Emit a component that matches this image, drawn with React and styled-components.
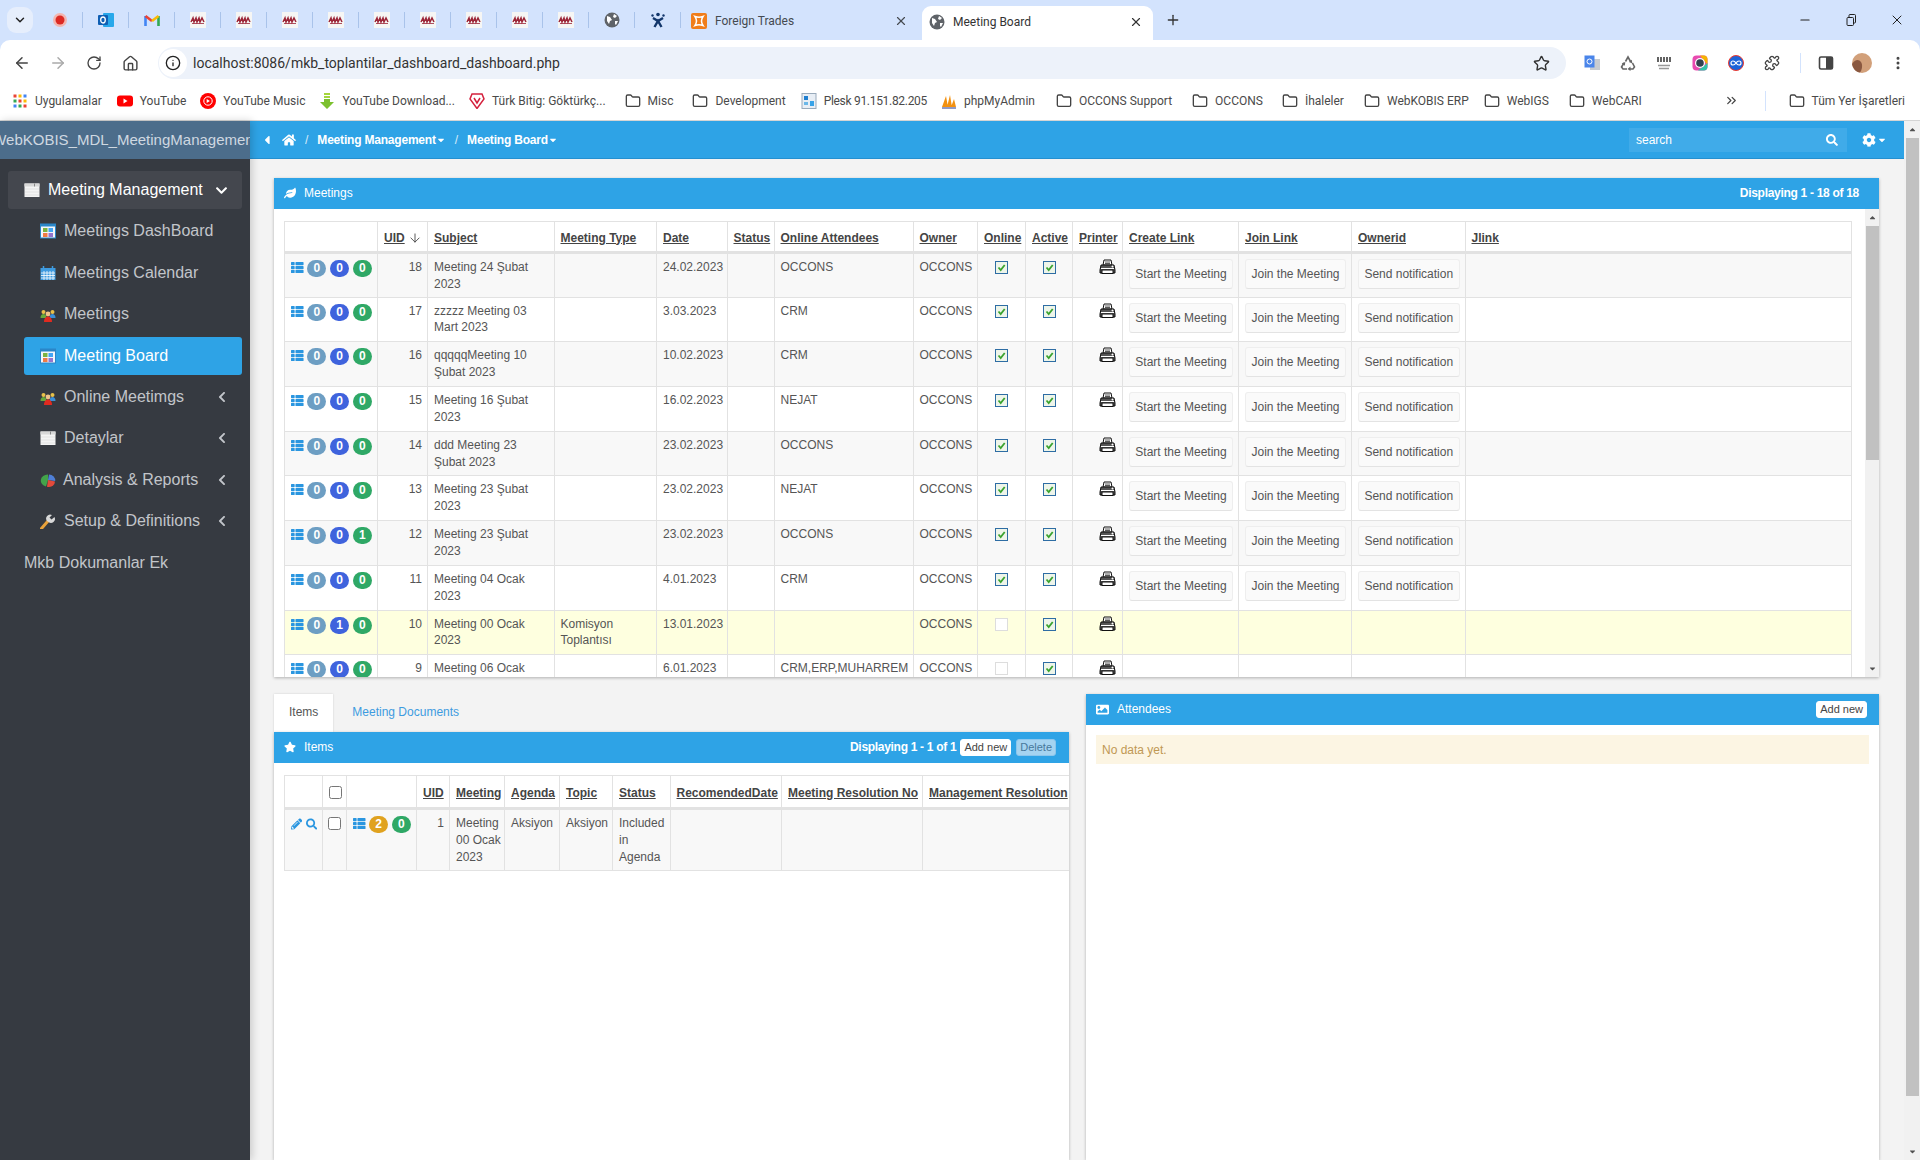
import React from 'react';
import styled, { createGlobalStyle } from 'styled-components';
import {
  ArrowLeft, ArrowRight, RotateCw, House, Info, Star, Puzzle, Folder, ChevronsRight,
  X, Plus, Minus, EllipsisVertical, ChevronDown, ArrowDown,
} from 'lucide-react';
import {
  FaLeaf, FaStar, FaImage, FaHome, FaSearch, FaCog, FaPencilAlt, FaThList,
  FaCaretLeft, FaCaretDown, FaCaretUp, FaChevronDown, FaChevronLeft,
} from 'react-icons/fa';

const GlobalStyle = createGlobalStyle`
  html, body { margin: 0; padding: 0; height: 100%; overflow: hidden; }
  body { font-family: "Liberation Sans", Arial, sans-serif; font-size: 12px; color: #555; }
  * { box-sizing: border-box; }
`;

const Page = styled.div`
  width: 1920px;
  height: 1160px;
  display: flex;
  flex-direction: column;
  overflow: hidden;
  background: #d3e3fd;
`;

/* browser chrome */
const TabStrip = styled.div`
  height: 40px;
  display: flex;
  align-items: flex-end;
  padding-left: 7px;
  font-family: Roboto, "Liberation Sans", sans-serif;
  font-size: 12px;
  color: #444;
`;

const TabListButton = styled.div`
  width: 26px;
  height: 26px;
  margin: 0 4px 7px 0;
  border-radius: 9px;
  background: #e6eefc;
  display: flex;
  align-items: center;
  justify-content: center;
  color: #222;
`;

const PinnedTab = styled.div`
  width: 46px;
  height: 40px;
  display: flex;
  align-items: center;
  justify-content: center;
  position: relative;
  &::after {
    content: '';
    position: absolute;
    right: 0;
    top: 12px;
    height: 16px;
    width: 1px;
    background: #a9c3ea;
  }
`;

const OpenTab = styled.div`
  width: ${p => p.$w}px;
  height: 34px;
  display: flex;
  align-items: center;
  gap: 8px;
  padding: 0 ${p => (p.$active ? 10 : 14)}px ${p => (p.$active ? 3 : 0)}px ${p => p.$pad}px;
  background: ${p => (p.$active ? '#fff' : 'transparent')};
  border-radius: 9px 9px 0 0;
  margin-bottom: ${p => (p.$active ? 0 : 2)}px;
  color: ${p => (p.$active ? '#333' : '#454a50')};
`;

const TabTitle = styled.span`
  flex: 1;
  white-space: nowrap;
`;

const NewTab = styled.div`
  width: 40px;
  height: 40px;
  display: flex;
  align-items: center;
  justify-content: center;
  color: #333;
`;

const WindowButtons = styled.div`
  margin-left: auto;
  display: flex;
  color: #222;
`;

const WindowButton = styled.div`
  width: 46px;
  height: 40px;
  display: flex;
  align-items: center;
  justify-content: center;
`;

const Toolbar = styled.div`
  height: 44px;
  background: #fff;
  border-radius: 10px 10px 0 0;
  display: flex;
  align-items: center;
  padding: 2px 0 0 4px;
  color: #444;
`;

const ToolSlot = styled.div`
  width: 36px;
  height: 32px;
  flex: none;
  display: flex;
  align-items: center;
  justify-content: center;
  color: ${p => p.$color || '#444'};
`;

const AddressBar = styled.div`
  width: 1408px;
  height: 32px;
  margin: 0 8px 0 10px;
  border-radius: 16px;
  background: #edf2fa;
  display: flex;
  align-items: center;
  font-family: Roboto, "Liberation Sans", sans-serif;
  font-size: 14px;
  color: #333;
  padding-right: 16px;
`;

const InfoBubble = styled.div`
  width: 28px;
  height: 28px;
  margin: 0 6px 0 1px;
  border-radius: 50%;
  background: #fff;
  display: flex;
  align-items: center;
  justify-content: center;
  color: #222;
`;

const Url = styled.span`
  flex: 1;
`;

const ToolSep = styled.div`
  width: 1px;
  height: 20px;
  margin: 0 7px 0 10px;
  background: #d3e3fd;
`;

const Bookmarks = styled.div`
  height: 37px;
  background: #fff;
  border-bottom: 1px solid #d5d5d5;
  display: flex;
  align-items: center;
  gap: 17px;
  padding: 0 15px 3px 12px;
  font-family: Roboto, "Liberation Sans", sans-serif;
  font-size: 12px;
  color: #444;
`;

const Bookmark = styled.div`
  display: flex;
  align-items: center;
  gap: 7px;
  white-space: nowrap;
  color: #4a4a4a;
  margin-right: ${p => p.$adj || 0}px;
  letter-spacing: ${p => (p.$narrow ? '-0.3px' : 'normal')};
  svg { flex: none; }
`;

const BookmarkEnd = styled.div`
  margin-left: auto;
  display: flex;
  align-items: center;
  gap: 16px;
`;

/* app shell */
const Shell = styled.div`
  flex: 1;
  min-height: 0;
  display: flex;
  background: #f3f3f3;
`;

const Sidebar = styled.aside`
  width: 250px;
  flex: none;
  background: #363a41;
  box-shadow: 2px 0 8px rgba(0, 0, 0, 0.18);
  position: relative;
  z-index: 1;
  font-size: 16px;
`;

const Brand = styled.div`
  height: 38px;
  padding-bottom: 1px;
  background: #4c6d8b;
  color: #cfd8e1;
  font-size: 15px;
  display: flex;
  align-items: center;
  justify-content: center;
  overflow: hidden;
  white-space: nowrap;
`;

const Menu = styled.nav`
  padding: 12px 8px 0;
  display: flex;
  flex-direction: column;
  gap: 3.4px;
`;

const MenuItem = styled.div`
  height: 38px;
  display: flex;
  align-items: center;
  gap: ${p => p.$gap ?? 8}px;
  border-radius: 3px;
  margin-left: ${p => (p.$top ? 0 : 16)}px;
  padding: 0 14px 0 16px;
  background: ${p => (p.$active ? '#2ea3e6' : p.$top ? '#44474e' : 'transparent')};
  color: ${p => (p.$active || p.$top ? '#fff' : '#c2c5ca')};
  svg { flex: none; }
`;

const PlainMenuItem = styled(MenuItem)`
  padding-left: 0;
  background: transparent;
  color: #c2c5ca;
`;

const MenuLabel = styled.span`
  flex: 1;
  white-space: nowrap;
`;

const Main = styled.main`
  flex: 1;
  min-width: 0;
  display: flex;
  flex-direction: column;
`;

const TopBar = styled.header`
  height: 38px;
  flex: none;
  background: #2ea3e6;
  border-bottom: 1px solid #2590d0;
  display: flex;
  align-items: center;
  color: #fff;
  padding: 0 17px 0 10px;
  font-weight: bold;
`;

const Crumb = styled.span`
  display: flex;
  align-items: center;
  white-space: nowrap;
  letter-spacing: -0.2px;
`;

const CrumbSep = styled.span`
  margin: 0 9px;
  font-weight: normal;
  opacity: 0.8;
`;

const HomeLink = styled.span`
  display: flex;
  margin-left: 8px;
`;

const SearchBox = styled.div`
  margin-left: auto;
  width: 218px;
  height: 24px;
  background: #40abe9;
  display: flex;
  align-items: center;
  padding: 0 9px 0 7px;
`;

const SearchInput = styled.input`
  flex: 1;
  min-width: 0;
  border: 0;
  outline: 0;
  background: transparent;
  color: #fff;
  font: 12px "Liberation Sans", Arial, sans-serif;
  padding: 0;
  &::placeholder { color: #fff; opacity: 1; }
`;

const GearMenu = styled.div`
  display: flex;
  align-items: center;
  margin-left: 15px;
  gap: 1px;
`;

const Content = styled.div`
  flex: 1;
  min-height: 0;
  display: flex;
  flex-direction: column;
  padding: 19px 25px 0 24px;
  gap: 17px;
`;

const Panel = styled.section`
  background: #fff;
  box-shadow: 0 1px 3px rgba(0, 0, 0, 0.28);
  display: flex;
  flex-direction: column;
  overflow: hidden;
  height: ${p => p.$h || 'auto'};
  flex: ${p => (p.$grow ? 1 : 'none')};
  min-height: 0;
`;

const PanelHead = styled.div`
  height: 31px;
  flex: none;
  background: #2ea3e6;
  color: #fff;
  display: flex;
  align-items: center;
  gap: 8px;
  padding: 0 ${p => p.$right ?? 13}px 1px 10px;
`;

const PanelTitle = styled.span`
  flex: 1;
`;

const Count = styled.span`
  font-weight: bold;
  letter-spacing: -0.3px;
`;

const HeadButton = styled.button`
  height: 17px;
  padding: 0 3px;
  border: 1px solid ${p => (p.$muted ? '#8cc6ec' : '#fff')};
  border-radius: 3px;
  background: ${p => (p.$muted ? '#a5d3f0' : '#fff')};
  color: ${p => (p.$muted ? '#47789b' : '#444')};
  font: 11px "Liberation Sans", Arial, sans-serif;
  margin-left: ${p => p.$ml ?? 0}px;
`;

const PanelBody = styled.div`
  flex: 1;
  min-height: 0;
  display: flex;
`;

const TableArea = styled.div`
  flex: 1;
  min-width: 0;
  overflow: hidden;
  padding: ${p => p.$pad};
`;

const Grid = styled.table`
  table-layout: fixed;
  border-collapse: collapse;
  width: ${p => p.$w}px;
  border: 1px solid #e2e2e2;
`;

const Column = styled.col`
  width: ${p => p.$w}px;
`;

const HeadCell = styled.th`
  height: ${p => p.$h || 31}px;
  padding: 2px 5px 0 6px;
  border: 1px solid #e2e2e2;
  border-bottom: 3px solid #e2e2e2;
  text-align: left;
  font-size: 12px;
  color: #444;
  white-space: nowrap;
  overflow: hidden;
`;

const HeadLink = styled.span`
  text-decoration: underline;
  display: inline-flex;
  align-items: center;
  gap: 3px;
`;

const Row = styled.tr`
  height: ${p => p.$h || 44.7}px;
  background: ${p => (p.$warn ? '#feffdf' : p.$striped ? '#f8f8f8' : '#fff')};
`;

const Cell = styled.td`
  padding: 5px ${p => (p.$flush ? 0 : p.$tight ? 2 : 5)}px 0 ${p => (p.$flush ? 0 : 6)}px;
  border: 1px solid #e2e2e2;
  vertical-align: top;
  line-height: 16.8px;
  text-align: ${p => p.$align || 'left'};
  white-space: ${p => (p.$nowrap ? 'nowrap' : 'normal')};
  overflow: hidden;
`;

const BadgeRow = styled.div`
  display: flex;
  align-items: center;
  gap: 3.5px;
  height: 17px;
  margin-top: 1px;
  color: #2a96e0;
  svg { margin-bottom: 2px; }
`;

const Badge = styled.span`
  width: 20px;
  height: 17px;
  border-radius: 9px;
  background: ${p => p.$color};
  color: #fff;
  font-weight: bold;
  font-size: 12px;
  line-height: 17px;
  text-align: center;
`;

const TickBox = styled.span`
  display: block;
  width: 13px;
  height: 13px;
  margin: 2px auto 0;
  border: 1px solid ${p => (p.$on ? '#2e6da4' : '#ddd')};
  background: ${p => (p.$on ? '#eef5ea' : '#fff')};
  svg { display: block; }
`;

const LinkButton = styled.button`
  display: block;
  width: 100%;
  height: 30px;
  padding: 0;
  border: 1px solid #eee;
  border-bottom-color: #e3e3e3;
  border-radius: 3px;
  background: #fafafa;
  color: #555;
  font: 12px "Liberation Sans", Arial, sans-serif;
`;

const PrintIcon = styled.div`
  text-align: right;
  padding-right: 1px;
  height: 16px;
`;

const TableCheck = styled.input`
  display: block;
  width: 13px;
  height: 13px;
  margin: ${p => p.$mt || 0}px auto 0;
`;

const ScrollTrack = styled.div`
  width: ${p => p.$w}px;
  flex: none;
  background: #f1f1f1;
  display: flex;
  flex-direction: column;
  align-items: center;
  color: #505050;
`;

const ScrollArrow = styled.div`
  height: 17px;
  flex: none;
  display: flex;
  align-items: center;
  justify-content: center;
  margin-top: ${p => (p.$end ? 'auto' : 0)};
`;

const ScrollThumb = styled.div`
  width: 13px;
  height: ${p => p.$h}px;
  background: #c1c1c1;
`;

const Lower = styled.div`
  flex: 1;
  min-height: 0;
  display: grid;
  grid-template-columns: 795px 793px;
  gap: 17px;
`;

const LeftStack = styled.div`
  display: flex;
  flex-direction: column;
  min-height: 0;
`;

const TabBar = styled.div`
  height: 38px;
  flex: none;
  display: flex;
  align-items: stretch;
`;

const PaneTab = styled.div`
  display: flex;
  align-items: center;
  padding: 0 ${p => p.$pad}px 2px;
  background: ${p => (p.$active ? '#fff' : 'transparent')};
  color: ${p => (p.$active ? '#555' : '#3d9be0')};
  box-shadow: ${p => (p.$active ? '0 0 2px rgba(0,0,0,0.15)' : 'none')};
`;

const Alert = styled.div`
  height: 29px;
  margin: 10px 10px 0;
  padding-left: 6px;
  background: #fcf5e3;
  color: #c09853;
  display: flex;
  align-items: center;
`;

const Legend = ({ children, size = 16 }) => (
  <svg width={size} height={size} viewBox="0 0 16 16">{children}</svg>
);

const WindowIcon = () => (
  <Legend>
    <rect x="0.5" y="1.5" width="15" height="13.5" fill="#f4f4f4" />
    <rect x="0.5" y="1.5" width="15" height="3" fill="#d8d8d8" />
    <rect x="10" y="1.5" width="1" height="3" fill="#888" />
    <path d="M1 7h14M1 10h14M1 13h14" stroke="#e2e2e2" />
  </Legend>
);

const BoardIcon = () => (
  <Legend>
    <rect x="0.5" y="1" width="15" height="14" fill="#f3f6fa" stroke="#2a86c8" />
    <rect x="0.5" y="1" width="15" height="2.5" fill="#2a86c8" />
    <rect x="3" y="5" width="4.5" height="4" fill="#7cb342" />
    <rect x="8.5" y="5" width="4.5" height="4" fill="#42a5f5" />
    <rect x="3" y="10" width="4.5" height="4" fill="#ef7b45" />
    <rect x="8.5" y="10" width="4.5" height="4" fill="#9575cd" />
  </Legend>
);

const CalendarIcon = () => (
  <Legend>
    <rect x="0.5" y="3" width="15" height="12" fill="#3f9be0" />
    <path d="M3.5 1v4M12.5 1v4" stroke="#3f9be0" strokeWidth="1.5" />
    <path d="M1 8h14M1 10.5h14M1 13h14M4 6v9M7 6v9M10 6v9M13 6v9" stroke="#fff" strokeWidth="0.8" />
  </Legend>
);

const PeopleIcon = () => (
  <Legend>
    <circle cx="3.5" cy="6" r="2" fill="#e8c14a" />
    <path d="M0.5 12c0-3 1.5-4 3-4s3 1 3 4z" fill="#68a83c" />
    <circle cx="12.5" cy="6" r="2" fill="#e8c14a" />
    <path d="M9.5 12c0-3 1.5-4 3-4s3 1 3 4z" fill="#3a8fd8" />
    <circle cx="8" cy="8" r="2.4" fill="#f0c48a" />
    <path d="M4 16c0-4 2-5.5 4-5.5s4 1.5 4 5.5z" fill="#e02b20" />
  </Legend>
);

const PieIcon = () => (
  <Legend>
    <path d="M8 8L9 2.5a6.5 6 0 0 1 6.2 6.5z" fill="#4f7fd6" />
    <path d="M8 8l7 1.5a7 6 0 0 1-6 5.5 6 6 0 0 1-2-.3z" fill="#e24a3b" />
    <path d="M8 8L6 14.500A7 6 0 0 1 .8 8 7 6 0 0 1 8 2.500z" fill="#43a34a" />
  </Legend>
);

const WrenchIcon = () => (
  <Legend>
    <path d="M1.5 15.500L8 8" stroke="#e9a23b" strokeWidth="3" strokeLinecap="round" />
    <path d="M7 8a4 4 0 0 1 5-6l-2.500 2.500 2 2L14.500 4a4 4 0 0 1-6 5z" fill="#d8d8d8" />
  </Legend>
);

const PrinterGlyph = () => (
  <svg width="17" height="16" viewBox="0 0 17 16">
    <path d="M5 1h7l1 5H4z" fill="#fff" stroke="#111" />
    <path d="M6 3h5M6 4.500h5" stroke="#111" strokeWidth="0.7" />
    <path d="M2 6h13l1 5v3H1v-3z" fill="#555" stroke="#111" />
    <path d="M2 9.500h13" stroke="#fff" />
    <rect x="3" y="11" width="11" height="3.500" fill="#fff" stroke="#111" />
    <circle cx="13.500" cy="7.500" r="1" fill="#fff" />
  </svg>
);

const CheckMark = () => (
  <svg width="11" height="11" viewBox="0 0 11 11">
    <path d="M2.500 5.500l2.200 2.500 4-5" fill="none" stroke="#3aa32f" strokeWidth="1.800" />
  </svg>
);

/* favicons */
const SiteIcon = () => (
  <Legend>
    <rect width="16" height="16" fill="#f6f6f4" />
    <path d="M1 10l2-4 1 4 2-4 1 4 2-4 1 4 2-4 2 4" fill="none" stroke="#9c2638" strokeWidth="1.500" />
    <path d="M2 11.500h12" stroke="#9c2638" strokeWidth="0.800" />
  </Legend>
);

const RedDotIcon = () => (
  <Legend>
    <circle cx="8" cy="8" r="7" fill="#f3b6b0" />
    <circle cx="8" cy="8" r="4.500" fill="#dc2a24" />
  </Legend>
);

const OutlookIcon = () => (
  <Legend>
    <rect x="5" y="1" width="11" height="14" rx="1" fill="#28a8ea" />
    <rect x="0" y="3" width="10" height="10" rx="1" fill="#0f5fb3" />
    <ellipse cx="5" cy="8" rx="2.300" ry="3" fill="none" stroke="#fff" strokeWidth="1.300" />
  </Legend>
);

const GmailIcon = () => (
  <Legend>
    <path d="M1.500 14V4" stroke="#4285f4" strokeWidth="2.600" />
    <path d="M14.500 14V4" stroke="#34a853" strokeWidth="2.600" />
    <path d="M1.500 4L8 9" stroke="#ea4335" strokeWidth="2.600" />
    <path d="M14.500 4L8 9" stroke="#fbbc04" strokeWidth="2.600" />
  </Legend>
);

const GlobeIcon = () => (
  <Legend>
    <circle cx="8" cy="8" r="7.500" fill="#5f6368" />
    <path d="M3 4l3 1 2 3-2 1-1 3-2-3zM10 2l3 2-2 2-2-1zM11 9l3 0-2 4-1-1z" fill="#fff" />
  </Legend>
);

const JiraIcon = () => (
  <Legend>
    <circle cx="8" cy="2.500" r="1.800" fill="#12366b" />
    <circle cx="2.500" cy="3.500" r="1.200" fill="#12366b" />
    <circle cx="13.500" cy="3.500" r="1.200" fill="#12366b" />
    <path d="M3 6l5 3 5-3M4.500 15L8 9l3.500 6" fill="none" stroke="#12366b" strokeWidth="2.400" />
  </Legend>
);

const XamppIcon = () => (
  <Legend>
    <rect width="16" height="16" rx="2" fill="#f07d1a" />
    <path d="M4 3.500c3 1 5 1 8 0-2 3-2 6 0 9-3-1-5-1-8 0 2-3 2-6 0-9z" fill="none" stroke="#fff" strokeWidth="1.500" />
  </Legend>
);

const AppsIcon = () => (
  <Legend>
    {['#ea4335', '#fbbc04', '#4285f4', '#34a853', '#ea4335', '#fbbc04', '#4285f4', '#34a853', '#ea4335'].map((c, i) => (
      <rect key={i} x={1.5 + (i % 3) * 5} y={1.5 + Math.floor(i / 3) * 5} width="3" height="3" fill={c} />
    ))}
  </Legend>
);

const YoutubeIcon = () => (
  <Legend>
    <rect y="2.500" width="16" height="11" rx="3" fill="#f00" />
    <path d="M6.500 5.500l4 2.500-4 2.500z" fill="#fff" />
  </Legend>
);

const MusicIcon = () => (
  <Legend>
    <circle cx="8" cy="8" r="8" fill="#f00" />
    <circle cx="8" cy="8" r="4.200" fill="none" stroke="#fff" />
    <path d="M6.700 6l3.200 2-3.200 2z" fill="#fff" />
  </Legend>
);

const DownloadIcon = () => (
  <Legend>
    <path d="M5 0h6v2H5zM5 3h6v2H5z" fill="#a5d63c" />
    <path d="M5 6h6v3h4l-7 7-7-7h4z" fill="#7cc12f" />
  </Legend>
);

const BitigIcon = () => (
  <Legend>
    <path d="M3 1h10l2 5-7 9.500L1 6z" fill="#fff" stroke="#d4213d" strokeWidth="1.500" />
    <path d="M5 5l3 5 3-5" fill="none" stroke="#d4213d" strokeWidth="1.500" />
  </Legend>
);

const PleskIcon = () => (
  <Legend>
    <rect x="1" y="0.500" width="14" height="15" fill="#e8eef5" stroke="#9ab" />
    <rect x="3" y="3" width="4" height="4" fill="#1f7fd0" />
    <rect x="9" y="8" width="4" height="5" fill="#38a3e8" />
    <rect x="3" y="9" width="4" height="3" fill="#6bb7e8" />
  </Legend>
);

const PmaIcon = () => (
  <Legend>
    <path d="M1 14L5 3l2 11zM6 14l3-12 2 12zM10 14l3-8 2 8z" fill="#f29111" />
    <path d="M1 15h14" stroke="#6c78af" strokeWidth="1.500" />
  </Legend>
);

const TranslateIcon = () => (
  <Legend>
    <rect x="6" y="4" width="10" height="11" fill="#c8ccd0" />
    <rect x="0.500" y="0.500" width="10" height="12" fill="#4a85ea" />
    <circle cx="5.500" cy="6.500" r="2.500" fill="none" stroke="#fff" />
  </Legend>
);

const RecycleIcon = () => (
  <Legend>
    <g fill="none" stroke="#666" strokeWidth="1.600">
      <path d="M5.500 6.500L8 2l2.500 4.500" />
      <path d="M12.500 8l2 4-1.500 2H9" />
      <path d="M7 14H3l-1.500-2L4 8" />
    </g>
    <path d="M11.800 4.800l.6 3.700-3.500-1.400zM10.500 11.500V16L7.500 14zM1.700 8.200l3.600-1.200-.5 3.700z" fill="#666" />
  </Legend>
);

const CoolIcon = () => (
  <Legend>
    <path d="M2 2v5M5 2v5M8 2v5M11 2v5M14 2v5" stroke="#222" strokeWidth="1.400" />
    <path d="M2 10.500h12M3 13.500h10" stroke="#999" strokeWidth="1.600" />
  </Legend>
);

const RingIcon = () => (
  <Legend>
    <rect x="0.500" y="0.500" width="15" height="15" rx="4" fill="#e84bb0" />
    <path d="M8 .5h4a4 4 0 0 1 3.500 3.500V10z" fill="#f4b400" />
    <path d="M15.500 8v4a4 4 0 0 1-3.500 3.500H6z" fill="#31c4a8" />
    <circle cx="8" cy="8" r="5" fill="#fff" />
    <circle cx="8" cy="8" r="3.800" fill="#33414f" />
  </Legend>
);

const LoopIcon = () => (
  <Legend>
    <circle cx="8" cy="8" r="7.500" fill="#1d63d8" stroke="#ee3a2f" />
    <path d="M8 8c-1-1.500-2-2-3-2a2 2 0 0 0 0 4c1 0 2-.5 3-2s2-2 3-2a2 2 0 0 1 0 4c-1 0-2-.5-3-2z" fill="none" stroke="#fff" strokeWidth="1.200" />
  </Legend>
);

const SidePanelIcon = () => (
  <Legend>
    <rect x="1.500" y="2" width="13" height="12" rx="1.500" fill="none" stroke="#444" strokeWidth="1.600" />
    <rect x="8" y="2" width="6.500" height="12" fill="#444" />
  </Legend>
);

const AvatarIcon = () => (
  <svg width="20" height="20" viewBox="0 0 20 20">
    <circle cx="10" cy="10" r="10" fill="#d2a07a" />
    <path d="M0 11c3-5 7-5 9-2s1 8-1 10.500C4 19 1 16 0 11z" fill="#8a5840" />
  </svg>
);

const RestoreIcon = () => (
  <svg width="12" height="12" viewBox="0 0 12 12" fill="none" stroke="#222">
    <rect x="2" y="3.500" width="6.500" height="8" rx="1" />
    <path d="M4 3.500V1.500a1 1 0 0 1 1-1h4.500a1 1 0 0 1 1 1V8a1 1 0 0 1-1 1h-1" />
  </svg>
);

const FolderGlyph = () => <Folder size={16} strokeWidth={2} color="#444" />;

const pinned = [RedDotIcon, OutlookIcon, GmailIcon, SiteIcon, SiteIcon, SiteIcon, SiteIcon, SiteIcon, SiteIcon, SiteIcon, SiteIcon, SiteIcon, GlobeIcon, JiraIcon];

const bookmarks = [
  { Icon: AppsIcon, label: 'Uygulamalar', adj: -2 },
  { Icon: YoutubeIcon, label: 'YouTube', adj: -3 },
  { Icon: MusicIcon, label: 'YouTube Music', adj: -3 },
  { Icon: DownloadIcon, label: 'YouTube Download...', adj: -3 },
  { Icon: BitigIcon, label: 'Türk Bitig: Göktürkç...', adj: 2 },
  { Icon: FolderGlyph, label: 'Misc', adj: 2 },
  { Icon: FolderGlyph, label: 'Development', adj: -2 },
  { Icon: PleskIcon, label: 'Plesk 91.151.82.205', adj: -3, narrow: true },
  { Icon: PmaIcon, label: 'phpMyAdmin', adj: 4 },
  { Icon: FolderGlyph, label: 'OCCONS Support', adj: 3 },
  { Icon: FolderGlyph, label: 'OCCONS', adj: 2 },
  { Icon: FolderGlyph, label: 'İhaleler', adj: 3 },
  { Icon: FolderGlyph, label: 'WebKOBIS ERP', adj: -2 },
  { Icon: FolderGlyph, label: 'WebIGS', adj: 3 },
  { Icon: FolderGlyph, label: 'WebCARI' },
];

const subItems = [
  { Icon: BoardIcon, label: 'Meetings DashBoard' },
  { Icon: CalendarIcon, label: 'Meetings Calendar' },
  { Icon: PeopleIcon, label: 'Meetings' },
  { Icon: BoardIcon, label: 'Meeting Board', active: true },
  { Icon: PeopleIcon, label: 'Online Meetimgs', more: true },
  { Icon: WindowIcon, label: 'Detaylar', more: true },
  { Icon: PieIcon, label: 'Analysis & Reports', more: true, gap: 7 },
  { Icon: WrenchIcon, label: 'Setup & Definitions', more: true },
];

const meetingCols = [
  ['', 93], ['UID', 50], ['Subject', 126.5], ['Meeting Type', 102.5], ['Date', 70.5], ['Status', 47],
  ['Online Attendees', 139], ['Owner', 64.5], ['Online', 48], ['Active', 47], ['Printer', 50],
  ['Create Link', 116], ['Join Link', 113], ['Ownerid', 113.5], ['Jlink', 386.5],
];

const meetings = [
  { uid: 18, subject: 'Meeting 24 Şubat 2023', date: '24.02.2023', att: 'OCCONS', counts: [0, 0, 0], on: true },
  { uid: 17, subject: 'zzzzz Meeting 03 Mart 2023', date: '3.03.2023', att: 'CRM', counts: [0, 0, 0], on: true },
  { uid: 16, subject: 'qqqqqMeeting 10 Şubat 2023', date: '10.02.2023', att: 'CRM', counts: [0, 0, 0], on: true },
  { uid: 15, subject: 'Meeting 16 Şubat 2023', date: '16.02.2023', att: 'NEJAT', counts: [0, 0, 0], on: true },
  { uid: 14, subject: 'ddd Meeting 23 Şubat 2023', date: '23.02.2023', att: 'OCCONS', counts: [0, 0, 0], on: true },
  { uid: 13, subject: 'Meeting 23 Şubat 2023', date: '23.02.2023', att: 'NEJAT', counts: [0, 0, 0], on: true },
  { uid: 12, subject: 'Meeting 23 Şubat 2023', date: '23.02.2023', att: 'OCCONS', counts: [0, 0, 1], on: true },
  { uid: 11, subject: 'Meeting 04 Ocak 2023', date: '4.01.2023', att: 'CRM', counts: [0, 0, 0], on: true },
  { uid: 10, subject: 'Meeting 00 Ocak 2023', type: 'Komisyon Toplantısı', date: '13.01.2023', att: '', counts: [0, 1, 0], on: false, warn: true },
  { uid: 9, subject: 'Meeting 06 Ocak 2023', date: '6.01.2023', att: 'CRM,ERP,MUHARREM', counts: [0, 0, 0], on: false },
];

const itemCols = [
  ['', 38], ['check', 24], ['', 70], ['UID', 33], ['Meeting', 55], ['Agenda', 55], ['Topic', 53],
  ['Status', 57.5], ['RecomendedDate', 111.5], ['Meeting Resolution No', 141], ['Management Resolution', 155],
];

const badgeColors = ['#6d9ec3', '#3f63dd', '#2fa866'];

const MeetingRow = ({ m, striped }) => (
  <Row $warn={m.warn} $striped={striped}>
    <Cell>
      <BadgeRow>
        <FaThList size={13} />
        {m.counts.map((c, i) => <Badge key={i} $color={badgeColors[i]}>{c}</Badge>)}
      </BadgeRow>
    </Cell>
    <Cell $align="right">{m.uid}</Cell>
    <Cell>{m.subject}</Cell>
    <Cell>{m.type}</Cell>
    <Cell>{m.date}</Cell>
    <Cell />
    <Cell $nowrap>{m.att}</Cell>
    <Cell>OCCONS</Cell>
    <Cell $flush><TickBox $on={m.on}>{m.on && <CheckMark />}</TickBox></Cell>
    <Cell $flush><TickBox $on><CheckMark /></TickBox></Cell>
    <Cell><PrintIcon><PrinterGlyph /></PrintIcon></Cell>
    <Cell>{m.on && <LinkButton>Start the Meeting</LinkButton>}</Cell>
    <Cell>{m.on && <LinkButton>Join the Meeting</LinkButton>}</Cell>
    <Cell>{m.on && <LinkButton>Send notification</LinkButton>}</Cell>
    <Cell />
  </Row>
);

export default function App() {
  return (
    <Page>
      <GlobalStyle />
      <TabStrip>
        <TabListButton><ChevronDown size={14} strokeWidth={2.5} /></TabListButton>
        {pinned.map((Icon, i) => <PinnedTab key={i}><Icon /></PinnedTab>)}
        <OpenTab $w={241} $pad={10}>
          <XamppIcon />
          <TabTitle>Foreign Trades</TabTitle>
          <X size={14} />
        </OpenTab>
        <OpenTab $w={231} $pad={7} $active>
          <GlobeIcon />
          <TabTitle>Meeting Board</TabTitle>
          <X size={14} />
        </OpenTab>
        <NewTab><Plus size={16} /></NewTab>
        <WindowButtons>
          <WindowButton><Minus size={14} /></WindowButton>
          <WindowButton><RestoreIcon /></WindowButton>
          <WindowButton><X size={16} strokeWidth={1.5} /></WindowButton>
        </WindowButtons>
      </TabStrip>

      <Toolbar>
        <ToolSlot><ArrowLeft size={18} /></ToolSlot>
        <ToolSlot $color="#aaa"><ArrowRight size={18} /></ToolSlot>
        <ToolSlot><RotateCw size={16} /></ToolSlot>
        <ToolSlot><House size={17} /></ToolSlot>
        <AddressBar>
          <InfoBubble><Info size={16} /></InfoBubble>
          <Url>localhost:8086/mkb_toplantilar_dashboard_dashboard.php</Url>
          <Star size={17} strokeWidth={2} color="#333" />
        </AddressBar>
        <ToolSlot><TranslateIcon /></ToolSlot>
        <ToolSlot><RecycleIcon /></ToolSlot>
        <ToolSlot><CoolIcon /></ToolSlot>
        <ToolSlot><RingIcon /></ToolSlot>
        <ToolSlot><LoopIcon /></ToolSlot>
        <ToolSlot><Puzzle size={16} /></ToolSlot>
        <ToolSep />
        <ToolSlot><SidePanelIcon /></ToolSlot>
        <ToolSlot><AvatarIcon /></ToolSlot>
        <ToolSlot><EllipsisVertical size={16} strokeWidth={2.5} /></ToolSlot>
      </Toolbar>

      <Bookmarks>
        {bookmarks.map(({ Icon, label, adj, narrow }) => (
          <Bookmark key={label} $adj={adj} $narrow={narrow}><Icon />{label}</Bookmark>
        ))}
        <BookmarkEnd>
          <ChevronsRight size={15} />
          <ToolSep />
          <Bookmark><FolderGlyph />Tüm Yer İşaretleri</Bookmark>
        </BookmarkEnd>
      </Bookmarks>

      <Shell>
        <Sidebar>
          <Brand>WebKOBIS_MDL_MeetingManagement</Brand>
          <Menu>
            <MenuItem $top>
              <WindowIcon />
              <MenuLabel>Meeting Management</MenuLabel>
              <FaChevronDown size={13} />
            </MenuItem>
            {subItems.map(item => (
              <MenuItem key={item.label} $active={item.active} $gap={item.gap}>
                <item.Icon />
                <MenuLabel>{item.label}</MenuLabel>
                {item.more && <FaChevronLeft size={12} />}
              </MenuItem>
            ))}
            <PlainMenuItem>Mkb Dokumanlar Ek</PlainMenuItem>
          </Menu>
        </Sidebar>

        <Main>
          <TopBar>
            <FaCaretLeft size={14} />
            <HomeLink><FaHome size={14} /></HomeLink>
            <CrumbSep>/</CrumbSep>
            <Crumb>Meeting Management<FaCaretDown size={10} /></Crumb>
            <CrumbSep>/</CrumbSep>
            <Crumb>Meeting Board<FaCaretDown size={10} /></Crumb>
            <SearchBox>
              <SearchInput placeholder="search" readOnly />
              <FaSearch size={12} />
            </SearchBox>
            <GearMenu><FaCog size={14} /><FaCaretDown size={10} /></GearMenu>
          </TopBar>

          <Content>
            <Panel $h="499px">
              <PanelHead $right={20}>
                <FaLeaf size={12} />
                <PanelTitle>Meetings</PanelTitle>
                <Count>Displaying 1 - 18 of 18</Count>
              </PanelHead>
              <PanelBody>
                <TableArea $pad="12px 13px 0 10px">
                  <Grid $w={1567}>
                    <colgroup>
                      {meetingCols.map(([name, w], i) => <Column key={i} $w={w} />)}
                    </colgroup>
                    <thead>
                      <tr>
                        {meetingCols.map(([name], i) => (
                          <HeadCell key={i}>
                            {name && (
                              <HeadLink>
                                {name}
                                {name === 'UID' && <ArrowDown size={14} strokeWidth={1.5} />}
                              </HeadLink>
                            )}
                          </HeadCell>
                        ))}
                      </tr>
                    </thead>
                    <tbody>
                      {meetings.map((m, i) => <MeetingRow key={m.uid} m={m} striped={i % 2 === 0} />)}
                    </tbody>
                  </Grid>
                </TableArea>
                <ScrollTrack $w={14}>
                  <ScrollArrow><FaCaretUp size={9} /></ScrollArrow>
                  <ScrollThumb $h={234} />
                  <ScrollArrow $end><FaCaretDown size={9} /></ScrollArrow>
                </ScrollTrack>
              </PanelBody>
            </Panel>

            <Lower>
              <LeftStack>
                <TabBar>
                  <PaneTab $active $pad={15}>Items</PaneTab>
                  <PaneTab $pad={19}>Meeting Documents</PaneTab>
                </TabBar>
                <Panel $grow>
                  <PanelHead $right={13}>
                    <FaStar size={12} />
                    <PanelTitle>Items</PanelTitle>
                    <Count>Displaying 1 - 1 of 1</Count>
                    <HeadButton $ml={-4}>Add new</HeadButton>
                    <HeadButton $muted $ml={-3}>Delete</HeadButton>
                  </PanelHead>
                  <TableArea $pad="12px 0 0 10px">
                    <Grid $w={793}>
                      <colgroup>
                        {itemCols.map(([name, w], i) => <Column key={i} $w={w} />)}
                      </colgroup>
                      <thead>
                        <tr>
                          {itemCols.map(([name], i) => (
                            <HeadCell key={i} $h={33}>
                              {name === 'check' ? <TableCheck type="checkbox" /> : name && <HeadLink>{name}</HeadLink>}
                            </HeadCell>
                          ))}
                        </tr>
                      </thead>
                      <tbody>
                        <Row $h={62} $striped>
                          <Cell>
                            <BadgeRow>
                              <FaPencilAlt size={12} />
                              <FaSearch size={12} />
                            </BadgeRow>
                          </Cell>
                          <Cell $flush><TableCheck type="checkbox" $mt={2} /></Cell>
                          <Cell>
                            <BadgeRow>
                              <FaThList size={13} />
                              <Badge $color="#e0a21f">2</Badge>
                              <Badge $color="#2fa866">0</Badge>
                            </BadgeRow>
                          </Cell>
                          <Cell $align="right">1</Cell>
                          <Cell $tight>Meeting 00 Ocak 2023</Cell>
                          <Cell $tight>Aksiyon</Cell>
                          <Cell $tight>Aksiyon</Cell>
                          <Cell $tight>Included in Agenda</Cell>
                          <Cell />
                          <Cell />
                          <Cell />
                        </Row>
                      </tbody>
                    </Grid>
                  </TableArea>
                </Panel>
              </LeftStack>

              <Panel>
                <PanelHead $right={12}>
                  <FaImage size={13} />
                  <PanelTitle>Attendees</PanelTitle>
                  <HeadButton>Add new</HeadButton>
                </PanelHead>
                <Alert>No data yet.</Alert>
              </Panel>
            </Lower>
          </Content>
        </Main>

        <ScrollTrack $w={16}>
          <ScrollArrow><FaCaretUp size={9} /></ScrollArrow>
          <ScrollThumb $h={958} />
          <ScrollArrow $end><FaCaretDown size={9} /></ScrollArrow>
        </ScrollTrack>
      </Shell>
    </Page>
  );
}
